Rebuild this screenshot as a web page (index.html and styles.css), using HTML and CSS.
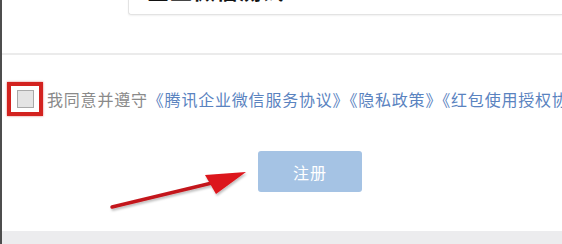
FILE: index.html
```html
<!DOCTYPE html>
<html lang="zh-CN">
  <head>
    <meta charset="UTF-8" />
    <meta name="viewport" content="width=device-width, initial-scale=1.0" />
    <title>注册</title>
    <link rel="stylesheet" href="styles.css">
  </head>
  <body>
    <div class="top">
      <div class="field">企业微信测试</div>
    </div>
    <div class="agree">
      <span class="mark"><span class="box"></span></span>
      <span class="label">我同意并遵守<a>《腾讯企业微信服务协议》</a><a>《隐私政策》</a><a>《红包使用授权协议》</a></span>
    </div>
    <div class="actions">
      <button class="submit">注册</button>
    </div>
    <div class="footer"></div>

    <svg class="arrow" width="562" height="244" viewBox="0 0 562 244">
      <defs>
        <filter id="blur" x="-10%" y="-30%" width="120%" height="160%">
          <feGaussianBlur stdDeviation="0.6" />
          <feDropShadow dx="1" dy="2" stdDeviation="1.2" flood-color="#000" flood-opacity="0.25" />
        </filter>
      </defs>
      <g filter="url(#blur)">
        <line x1="112" y1="207" x2="216" y2="182" stroke="#c3161b" stroke-width="3.4" stroke-linecap="round" />
        <polygon points="246,172 205,175 216,194" fill="#dc141a" />
      </g>
    </svg>
  </body>
</html>
```

FILE: styles.css
```css
* {
  box-sizing: border-box;
}
body {
  margin: 0;
  height: 244px;
  overflow: hidden;
  position: relative;
  display: flex;
  flex-direction: column;
  border-left: 2px solid #4d4d4d;
  background: #fff;
  font-family: "Noto Sans CJK SC", "Microsoft YaHei", sans-serif;
}
.top {
  height: 55px;
  border-bottom: 2px solid #ebebeb;
}
.field {
  margin-left: 126px;
  margin-top: -30px;
  height: 45px;
  display: flex;
  align-items: center;
  padding-left: 18px;
  padding-bottom: 8px;
  border: 1px solid #e3e3e3;
  border-right: none;
  border-radius: 3px 0 0 3px;
  box-shadow: 0 1px 2px rgba(0, 0, 0, 0.06);
  font-size: 22px;
  font-weight: bold;
  color: #111;
  letter-spacing: 1px;
}
.agree {
  margin-top: 27px;
  display: flex;
  align-items: center;
  padding-left: 5px;
  white-space: nowrap;
}
.mark {
  width: 36px;
  height: 34px;
  border: 4px solid #d3221f;
  box-shadow: 0 0 2px rgba(200, 30, 30, 0.6);
  display: flex;
  align-items: center;
  justify-content: center;
  flex-shrink: 0;
}
.box {
  width: 17px;
  height: 18px;
  border: 1px solid #a9a9a9;
  background: #e4e4e4;
}
.label {
  margin-left: 4px;
  font-size: 16px;
  letter-spacing: 0.8px;
  color: #8a8a8a;
}
.label a {
  color: #5a83bf;
}
.actions {
  margin-top: 35px;
  padding-left: 256px;
}
.submit {
  width: 104px;
  height: 41px;
  border: none;
  border-radius: 3px;
  background: #a5c3e4;
  color: #fff;
  font-family: inherit;
  font-size: 16px;
  letter-spacing: 1px;
}
.footer {
  margin-top: auto;
  height: 13px;
  background: #ececee;
}
.arrow {
  position: absolute;
  left: -2px;
  top: 0;
  pointer-events: none;
}
```
